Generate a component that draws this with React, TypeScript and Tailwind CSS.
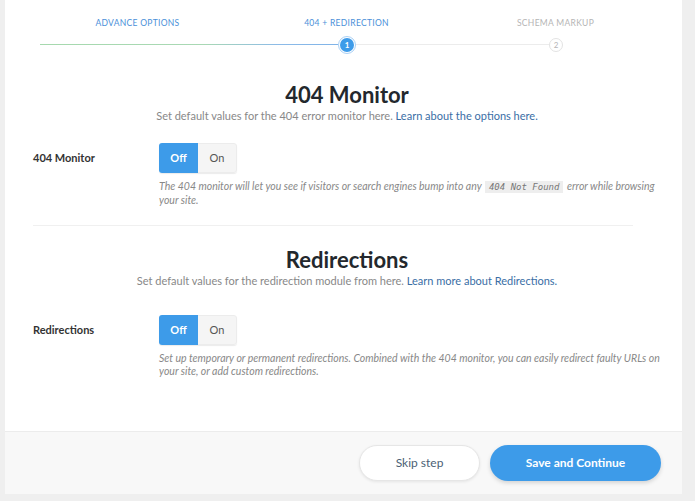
import React from 'react'

const font = { fontFamily: 'Lato, "Liberation Sans", sans-serif' }

function Toggle() {
  return (
    <div className="flex h-[30px] w-[78px] rounded-[3px] overflow-hidden shadow-[0_1px_1px_rgba(0,0,0,0.08)]">
      <button className="w-[39px] bg-[#3d9be9] text-white text-[11px] font-bold">Off</button>
      <button className="w-[39px] bg-[#f5f5f5] border border-l-0 border-[#ececec] text-[#555] text-[11px] rounded-r-[3px]">On</button>
    </div>
  )
}

interface SectionProps {
  title: string
  sub: string
  link: string
  label: string
  desc: React.ReactNode
  rowGap: string
}

function Section({ title, sub, link, label, desc, rowGap }: SectionProps) {
  return (
    <div>
      <div className="flex flex-col items-center pl-[6px] pr-[7px]">
        <h2 className="text-[22px] font-bold text-[#23282d] leading-[28px]">{title}</h2>
        <p className="text-[11px] text-[#888] leading-[14px]">
          {sub} <a className="text-[#3a6ea5]">{link}</a>
        </p>
      </div>
      <div className={`flex ${rowGap}`}>
        <div className="w-[126px] pt-[7px] text-[11px] font-bold text-[#333]">{label}</div>
        <div className="flex-1">
          <Toggle />
          <p className="mt-[7px] text-[10.5px] italic text-[#888] leading-[13px]">{desc}</p>
        </div>
      </div>
    </div>
  )
}

export default function App() {
  return (
    <div className="w-[695px] h-[501px] bg-[#efefef] overflow-hidden" style={font}>
      <div className="ml-[5px] w-[677px] h-[494px] bg-white flex flex-col">
        <div className="pt-[17px] pl-[28px] pr-[16px]">
          <div className="grid grid-cols-3 w-[627px] text-[8.5px] uppercase tracking-[0.3px]">
            <span className="text-center text-[#4a90d9]">Advance Options</span>
            <span className="text-center text-[#4a90d9]">404 + Redirection</span>
            <span className="text-center text-[#b5b5b5]">Schema Markup</span>
          </div>
          <div className="flex items-center mt-[6px] ml-[7px] h-[18px]">
            <div className="w-[298px] h-px bg-[linear-gradient(to_right,#a6d9ae_0%,#a9d8b4_55%,#8dbbe8_80%,#7fb3e8_100%)]" />
            <div className="w-[18px] h-[18px] rounded-full border border-[#a9d0f5] flex items-center justify-center">
              <div className="w-[14px] h-[14px] rounded-full bg-[#3d9be9] text-white text-[8px] font-bold flex items-center justify-center">1</div>
            </div>
            <div className="w-[193px] h-px bg-[#ececec]" />
            <div className="w-[14px] h-[14px] rounded-full border border-[#e3e3e3] bg-white text-[#b5b5b5] text-[8px] flex items-center justify-center">2</div>
          </div>
        </div>

        <div className="pl-[28px] pr-[20px] mt-[27px]">
          <Section
            title="404 Monitor"
            sub="Set default values for the 404 error monitor here."
            link="Learn about the options here."
            label="404 Monitor"
            rowGap="mt-[20px]"
            desc={
              <>
                The 404 monitor will let you see if visitors or search engines bump into any{' '}
                <code className="mx-[1px] px-[4px] py-[1px] bg-[#eeeeee] text-[#777] text-[9px] italic" style={{ fontFamily: '"DejaVu Sans Mono", monospace' }}>
                  404 Not Found
                </code>{' '}
                error while browsing your site.
              </>
            }
          />
          <div className="h-px bg-[#f0f0f0] mt-[18px] w-[600px]" />
          <div className="mt-[20px]">
            <Section
              title="Redirections"
              sub="Set default values for the redirection module from here."
              link="Learn more about Redirections."
              label="Redirections"
              rowGap="mt-[27px]"
              desc="Set up temporary or permanent redirections. Combined with the 404 monitor, you can easily redirect faulty URLs on your site, or add custom redirections."
            />
          </div>
        </div>

        <div className="mt-auto h-[63px] bg-[#f8f8f8] border-t border-[#ececec] flex items-center justify-end pr-[21px] gap-[10px]">
          <button className="w-[121px] h-[36px] rounded-full bg-white border border-[#e6e6e6] shadow-[0_1px_3px_rgba(0,0,0,0.08)] text-[12px] text-[#4b5f75]">
            Skip step
          </button>
          <button className="w-[171px] h-[36px] rounded-full bg-[#3d9be9] shadow-[0_2px_4px_rgba(0,0,0,0.15)] text-[12px] text-white font-bold">
            Save and Continue
          </button>
        </div>
      </div>
    </div>
  )
}
